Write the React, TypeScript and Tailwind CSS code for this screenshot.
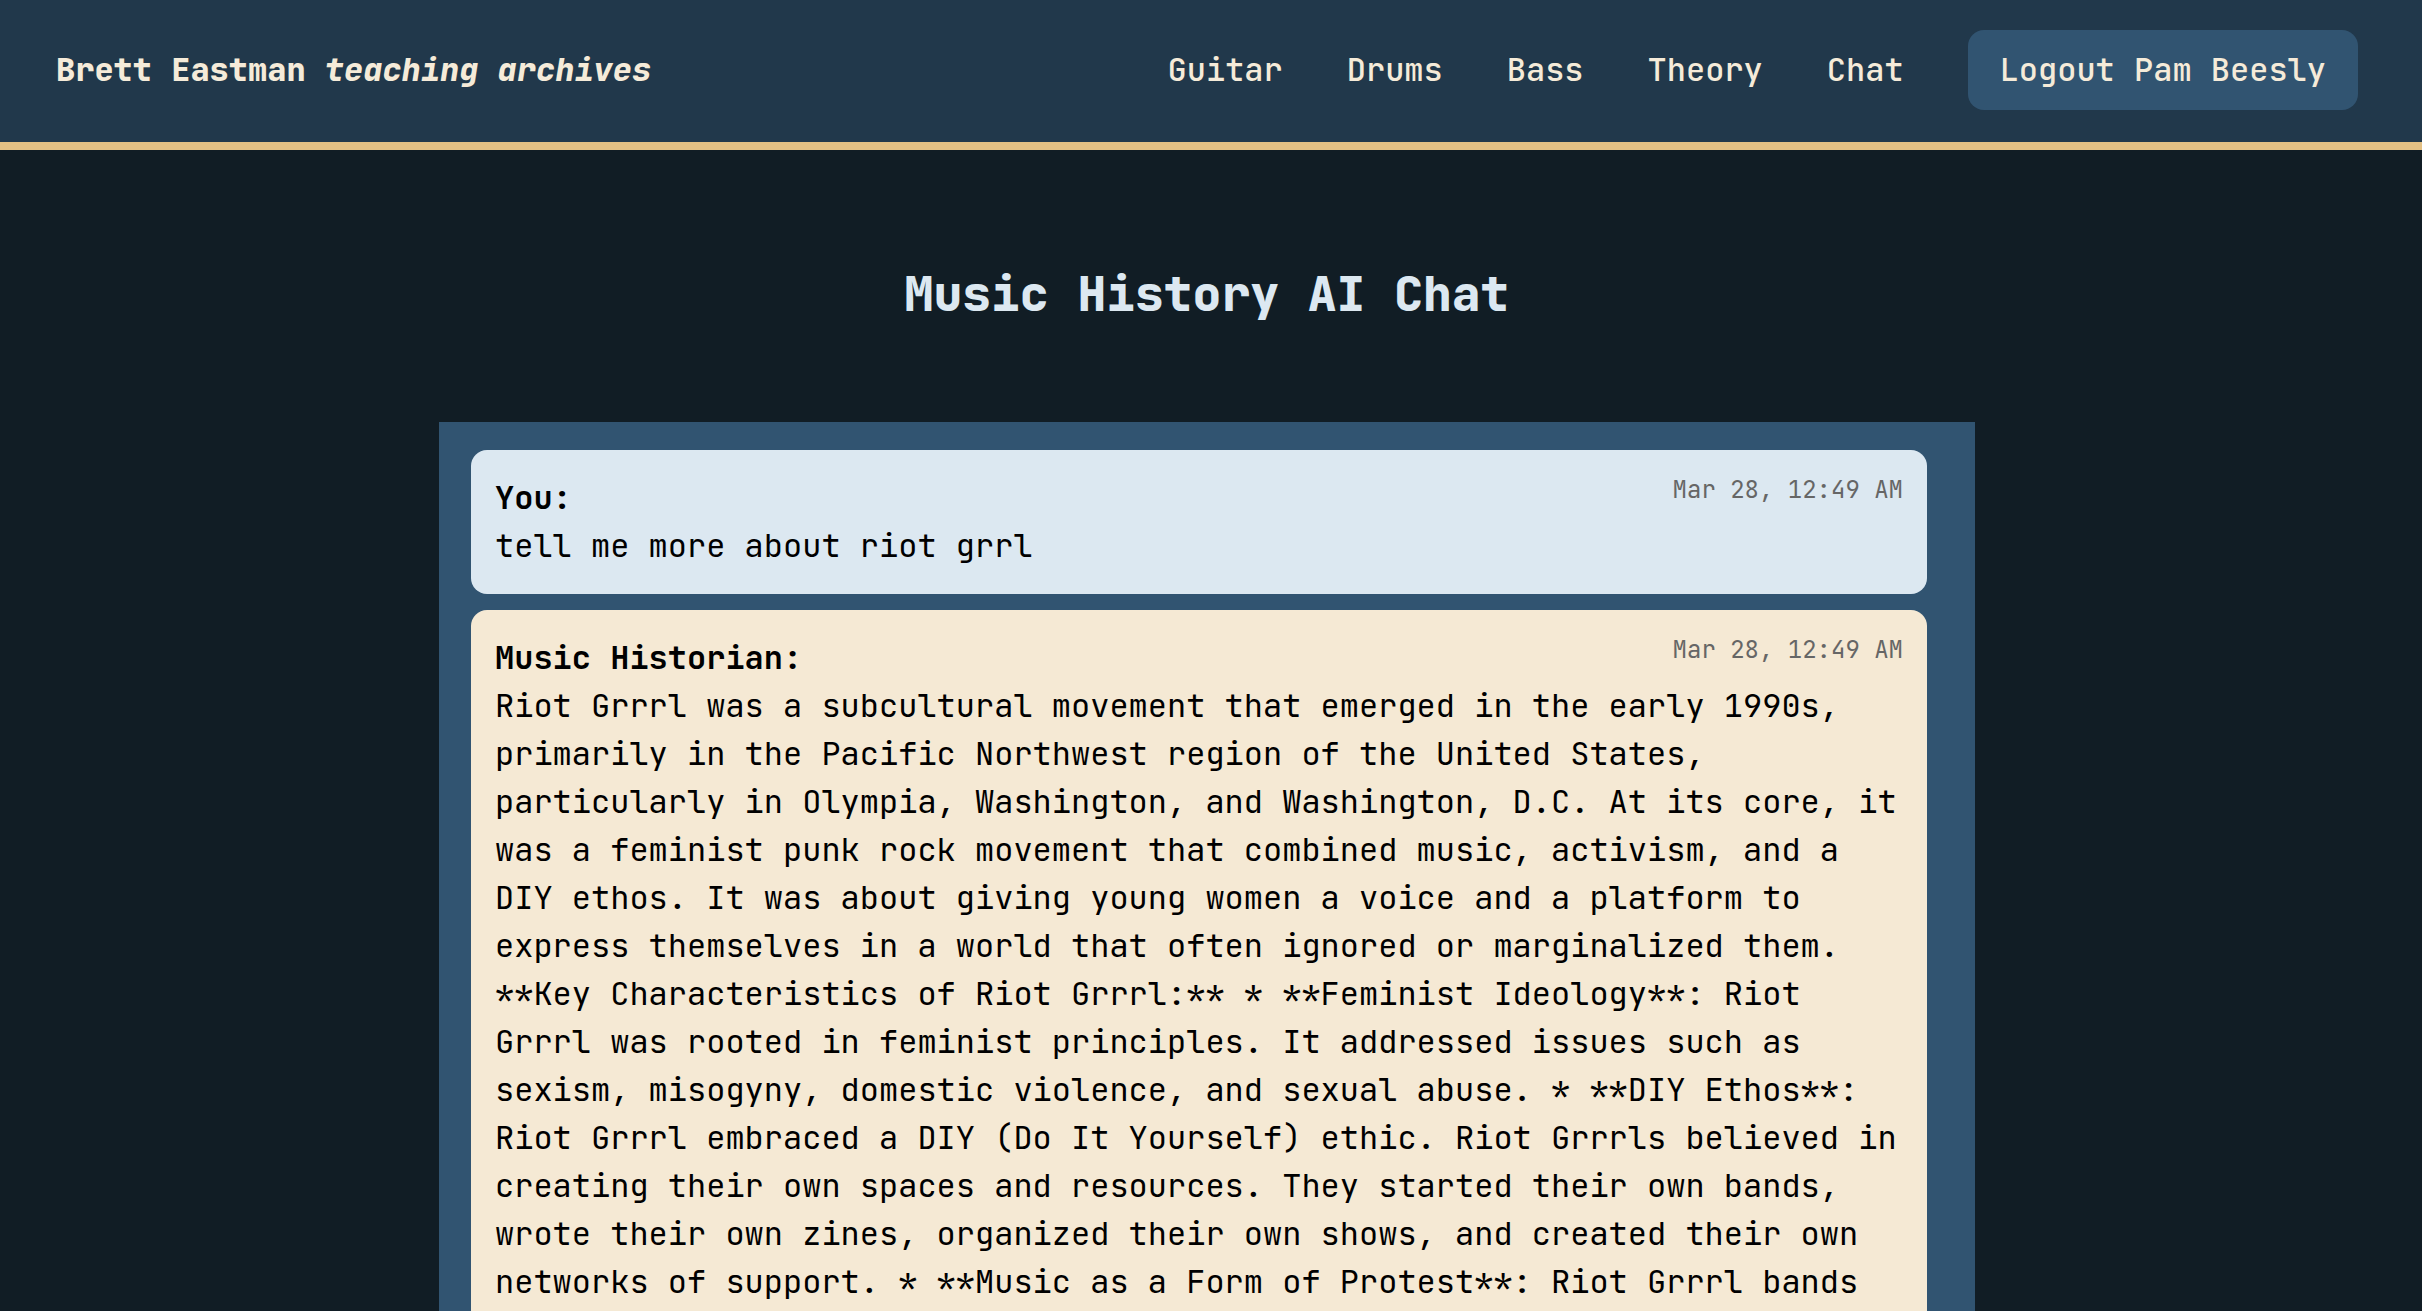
const links = ["Guitar", "Drums", "Bass", "Theory", "Chat"];

type Message = {
  author: string;
  time: string;
  text: string;
  tone: string;
};

const messages: Message[] = [
  {
    author: "You:",
    time: "Mar 28, 12:49 AM",
    text: "tell me more about riot grrl",
    tone: "bg-[#dce8f1]",
  },
  {
    author: "Music Historian:",
    time: "Mar 28, 12:49 AM",
    text: "Riot Grrrl was a subcultural movement that emerged in the early 1990s, primarily in the Pacific Northwest region of the United States, particularly in Olympia, Washington, and Washington, D.C. At its core, it was a feminist punk rock movement that combined music, activism, and a DIY ethos. It was about giving young women a voice and a platform to express themselves in a world that often ignored or marginalized them. **Key Characteristics of Riot Grrrl:** * **Feminist Ideology**: Riot Grrrl was rooted in feminist principles. It addressed issues such as sexism, misogyny, domestic violence, and sexual abuse. * **DIY Ethos**: Riot Grrrl embraced a DIY (Do It Yourself) ethic. Riot Grrrls believed in creating their own spaces and resources. They started their own bands, wrote their own zines, organized their own shows, and created their own networks of support. * **Music as a Form of Protest**: Riot Grrrl bands",
    tone: "bg-[#f5e9d4]",
  },
];

function Header() {
  return (
    <header className="flex items-center justify-between border-b-8 border-[#e3c084] bg-[#21384b] pt-[30px] pr-16 pb-8 pl-14 font-medium text-[#f5ebd9]">
      <a href="#" className="font-extrabold whitespace-nowrap">
        Brett Eastman <em>teaching archives</em>
      </a>
      <nav className="flex items-center gap-16">
        {links.map((link) => (
          <a key={link} href="#">
            {link}
          </a>
        ))}
        <button type="button" className="rounded-2xl bg-[#315471] px-8 py-4 whitespace-nowrap">
          Logout Pam Beesly
        </button>
      </nav>
    </header>
  );
}

function MessageCard({ message }: { message: Message }) {
  return (
    <article className={`rounded-2xl p-6 text-black ${message.tone}`}>
      <div className="flex items-start justify-between">
        <strong className="font-bold">{message.author}</strong>
        <time className="text-2xl leading-8 text-[#666666]">{message.time}</time>
      </div>
      <p>{message.text}</p>
    </article>
  );
}

export default function App() {
  return (
    <div className="h-screen overflow-hidden bg-[#111d25] font-['JetBrains_Mono','DejaVu_Sans_Mono',monospace] text-[32px] leading-[48px]">
      <Header />
      <main className="pt-30 pr-2">
        <h1 className="mb-26 text-center text-5xl leading-[48px] font-extrabold text-[#dce8f1]">
          Music History AI Chat
        </h1>
        <section className="mx-auto flex max-w-[1536px] flex-col gap-4 bg-[#315471] pt-7 pr-12 pb-7 pl-8">
          {messages.map((message) => (
            <MessageCard key={message.author} message={message} />
          ))}
        </section>
      </main>
    </div>
  );
}
